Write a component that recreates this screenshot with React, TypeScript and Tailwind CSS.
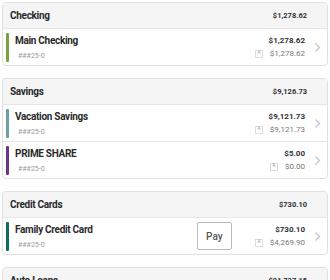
import React from "react";

type Row = { name: string; bar: string; amt: string; avail: string; pay?: boolean };
type Group = { title: string; total: string; rows: Row[] };

const groups: Group[] = [
  { title: "Checking", total: "$1,278.62", rows: [{ name: "Main Checking", bar: "bg-[#7ba23f]", amt: "$1,278.62", avail: "$1,278.62" }] },
  {
    title: "Savings",
    total: "$9,126.73",
    rows: [
      { name: "Vacation Savings", bar: "bg-[#6e9fa8]", amt: "$9,121.73", avail: "$9,121.73" },
      { name: "PRIME SHARE", bar: "bg-[#6b3589]", amt: "$5.00", avail: "$0.00" },
    ],
  },
  { title: "Credit Cards", total: "$730.10", rows: [{ name: "Family Credit Card", bar: "bg-[#0f6b5c]", amt: "$730.10", avail: "$4,269.90", pay: true }] },
  { title: "Auto Loans", total: "$21,737.15", rows: [] },
];

function Chevron() {
  return (
    <svg width="7" height="11" viewBox="0 0 7 11" className="shrink-0">
      <path d="M1.5 1.5 L5.5 5.5 L1.5 9.5" fill="none" stroke="#c4c4c4" strokeWidth="1.2" />
    </svg>
  );
}

export default function App() {
  return (
    <div className="w-[330px] h-[280px] overflow-hidden bg-white pt-[2px] px-[2px] flex flex-col gap-[12px] text-[#333]" style={{ fontFamily: "Roboto, 'Liberation Sans', sans-serif" }}>
      {groups.map((g) => (
        <div key={g.title} className="shrink-0 border border-[#e0e0e0] rounded-[4px] overflow-hidden bg-white">
          <div className="h-[25px] bg-[#f5f5f5] flex items-center justify-between pl-[7px] pr-[20px]">
            <span className="text-[10px] font-bold tracking-[-0.3px] text-[#2a2a2a]">{g.title}</span>
            <span className="text-[7.5px] font-bold text-[#333]">{g.total}</span>
          </div>
          {g.rows.map((r) => (
            <div key={r.name} className="h-[37px] border-t border-[#e6e6e6] flex items-center pl-[3px] pr-[6px]">
              <div className={`w-[3px] h-[29px] rounded-[1px] ${r.bar}`} />
              <div className="flex-1 flex flex-col pl-[6px] pt-[1px]">
                <span className="text-[10px] font-bold tracking-[-0.3px] text-[#2a2a2a] leading-[13px]">{r.name}</span>
                <span className="text-[7px] text-[#9a9a9a] leading-[10px] mt-[4px] pl-[3px]">###25-0</span>
              </div>
              {r.pay && (
                <div className="w-[35px] h-[28px] border border-[#bbb] rounded-[2px] flex items-center justify-center text-[10px] font-medium text-[#555] mr-[23px]">Pay</div>
              )}
              <div className="flex flex-col items-end mr-[9px]">
                <span className="text-[8px] font-bold text-[#333] leading-[11px]">{r.amt}</span>
                <div className="flex items-center gap-[7px] mt-[2px]">
                  <span className="w-[8px] h-[8px] border border-[#ddd] text-[4.5px] text-[#999] flex items-center justify-center leading-none">A</span>
                  <span className="text-[8px] text-[#777] leading-[11px]">{r.avail}</span>
                </div>
              </div>
              <Chevron />
            </div>
          ))}
        </div>
      ))}
    </div>
  );
}
